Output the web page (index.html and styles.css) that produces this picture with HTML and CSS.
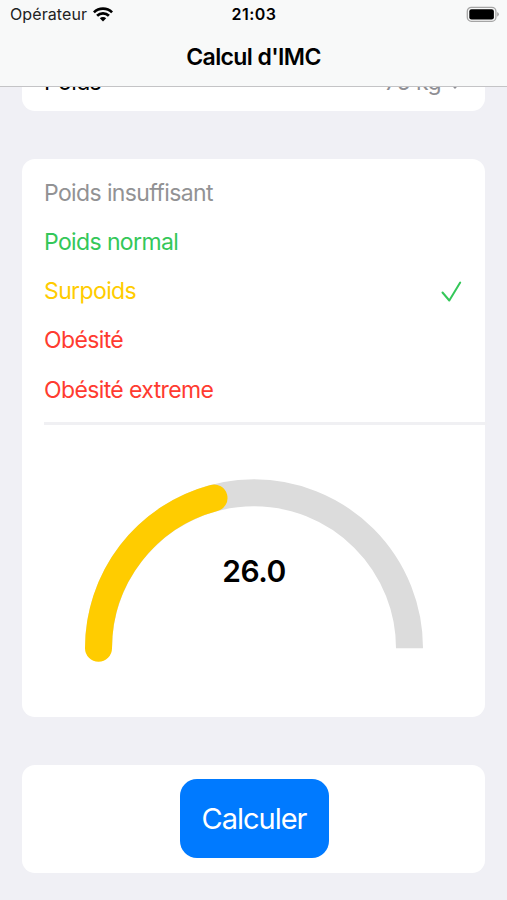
FILE: index.html
```html
<!DOCTYPE html>
<html lang="fr">
<head>
<meta charset="utf-8">
<title>Calcul d'IMC</title>
<link rel="stylesheet" href="styles.css">
</head>
<body>
<header class="header">
  <div class="status">
    <div class="carrier"><span class="carrier-name">Opérateur</span>
      <svg class="wifi" viewBox="0 0 20 15" width="20" height="15"><g fill="none" stroke="#000" stroke-width="2.7"><path d="M.9 5.4a13 13 0 0 1 18.2 0"/><path d="M4.1 8.8a8.4 8.4 0 0 1 11.8 0"/></g><path d="M10 14.4l-3.2-3.2a4.6 4.6 0 0 1 6.4 0z"/></svg>
    </div>
    <span class="time">21:03</span>
    <svg class="battery" viewBox="0 0 34 17" width="34" height="17"><rect x="1.3" y="1.3" width="28.6" height="14" rx="4" fill="none" stroke="#a5a5a5" stroke-width="1.3"/><rect x="3.3" y="3.2" width="24.6" height="10.2" rx="2.2"/><path d="M31.2 6v4.7q1.7-.8 1.7-2.35T31.2 6z" fill="#a5a5a5"/></svg>
  </div>
  <h1 class="title">Calcul d'IMC</h1>
</header>
<main class="form">
  <section class="card weight">
    <span class="weight-label">Poids</span>
    <span class="weight-value">75 kg <svg width="14" height="9" viewBox="0 0 14 9"><path d="M2 1.5l5 5 5-5" fill="none" stroke="#8e8e93" stroke-width="2"/></svg></span>
  </section>
  <section class="card result">
    <ul class="levels">
      <li class="gray">Poids insuffisant</li>
      <li class="green">Poids normal</li>
      <li class="yellow">Surpoids<svg class="check" width="21" height="21" viewBox="0 0 21 21"><path d="M1.5 11.5l6.8 8L19.2 1.5" fill="none" stroke="#34c759" stroke-width="2" stroke-linecap="round" stroke-linejoin="round"/></svg></li>
      <li class="red">Obésité</li>
      <li class="red">Obésité extreme</li>
    </ul>
    <div class="gauge">
      <svg width="340" height="184" viewBox="0 0 340 184"><g fill="none" stroke-width="27"><path d="M14.5 170.3a155.5 155.5 0 0 1 311 0" stroke="#dcdcdc"/><path d="M14.5 170.3A155.5 155.5 0 0 1 130 20" stroke="#fc0" stroke-linecap="round"/></g></svg>
      <span class="score">26.0</span>
    </div>
  </section>
  <section class="card action"><button class="submit">Calculer</button></section>
</main>
</body>
</html>
```
FILE: styles.css
```css
* { box-sizing: border-box; }
body {
  margin: 0;
  height: 900px;
  overflow: hidden;
  display: flex;
  flex-direction: column;
  background: #f0f0f5;
  font-family: Inter, "Liberation Sans", sans-serif;
  color: #000;
}
.header {
  flex: none;
  height: 87px;
  background: #f8f9f9;
  border-bottom: 1px solid #c4c4c6;
}
.status {
  display: grid;
  grid-template-columns: 1fr auto 1fr;
  align-items: center;
  height: 28px;
  padding: 0 7px 0 10px;
  font-size: 16px;
}
.carrier { display: flex; align-items: center; gap: 6px; color: #222; letter-spacing: .1px; }
.time { font-weight: 600; letter-spacing: .5px; margin-right: 2px; }
.battery { justify-self: end; }
.title {
  margin: 15px 0 0;
  font-size: 23px;
  line-height: 28px;
  font-weight: 600;
  text-align: center;
  letter-spacing: -.6px;
}
.form { flex: 1; overflow: hidden; padding: 0 22px; }
.card { background: #fff; border-radius: 13px; width: 463px; }
.weight {
  display: flex;
  align-items: flex-start;
  justify-content: space-between;
  height: 58px;
  margin-top: -34px;
  padding: 15px 23px 0 22px;
  font-size: 23px;
  line-height: 28px;
  letter-spacing: -.6px;
}
.weight-value { display: flex; align-items: center; gap: 7px; color: #8e8e93; }
.weight-value svg { margin-top: 7px; }
.result { height: 558px; margin-top: 48px; }
.levels {
  list-style: none;
  margin: 0 0 0 22px;
  padding: 9px 0 8px;
  width: 443px;
  height: 266px;
  border-bottom: 3px solid #f0f0f3;
  font-size: 23px;
  letter-spacing: -.62px;
}
.levels li {
  display: flex;
  align-items: center;
  justify-content: space-between;
  height: 49.25px;
  padding-right: 25px;
}
.gray { color: #929294; }
.green { color: #34c759; }
.yellow { color: #fc0; }
.red { color: #ff3b30; }
.gauge {
  display: grid;
  justify-items: center;
  align-items: center;
  margin-top: 53px;
}
.gauge > * { grid-area: 1 / 1; }
.score { font-size: 30px; font-weight: 600; letter-spacing: -.5px; padding: 1px 0 0 1px; }
.action {
  display: flex;
  align-items: center;
  justify-content: center;
  height: 108px;
  margin-top: 48px;
}
.submit {
  width: 149px;
  height: 79px;
  margin: 0 0 1px 1px;
  padding: 0;
  border: 0;
  border-radius: 17px;
  background: #007aff;
  color: #fff;
  font: 400 29px Inter, sans-serif;
  letter-spacing: -1px;
}
```
